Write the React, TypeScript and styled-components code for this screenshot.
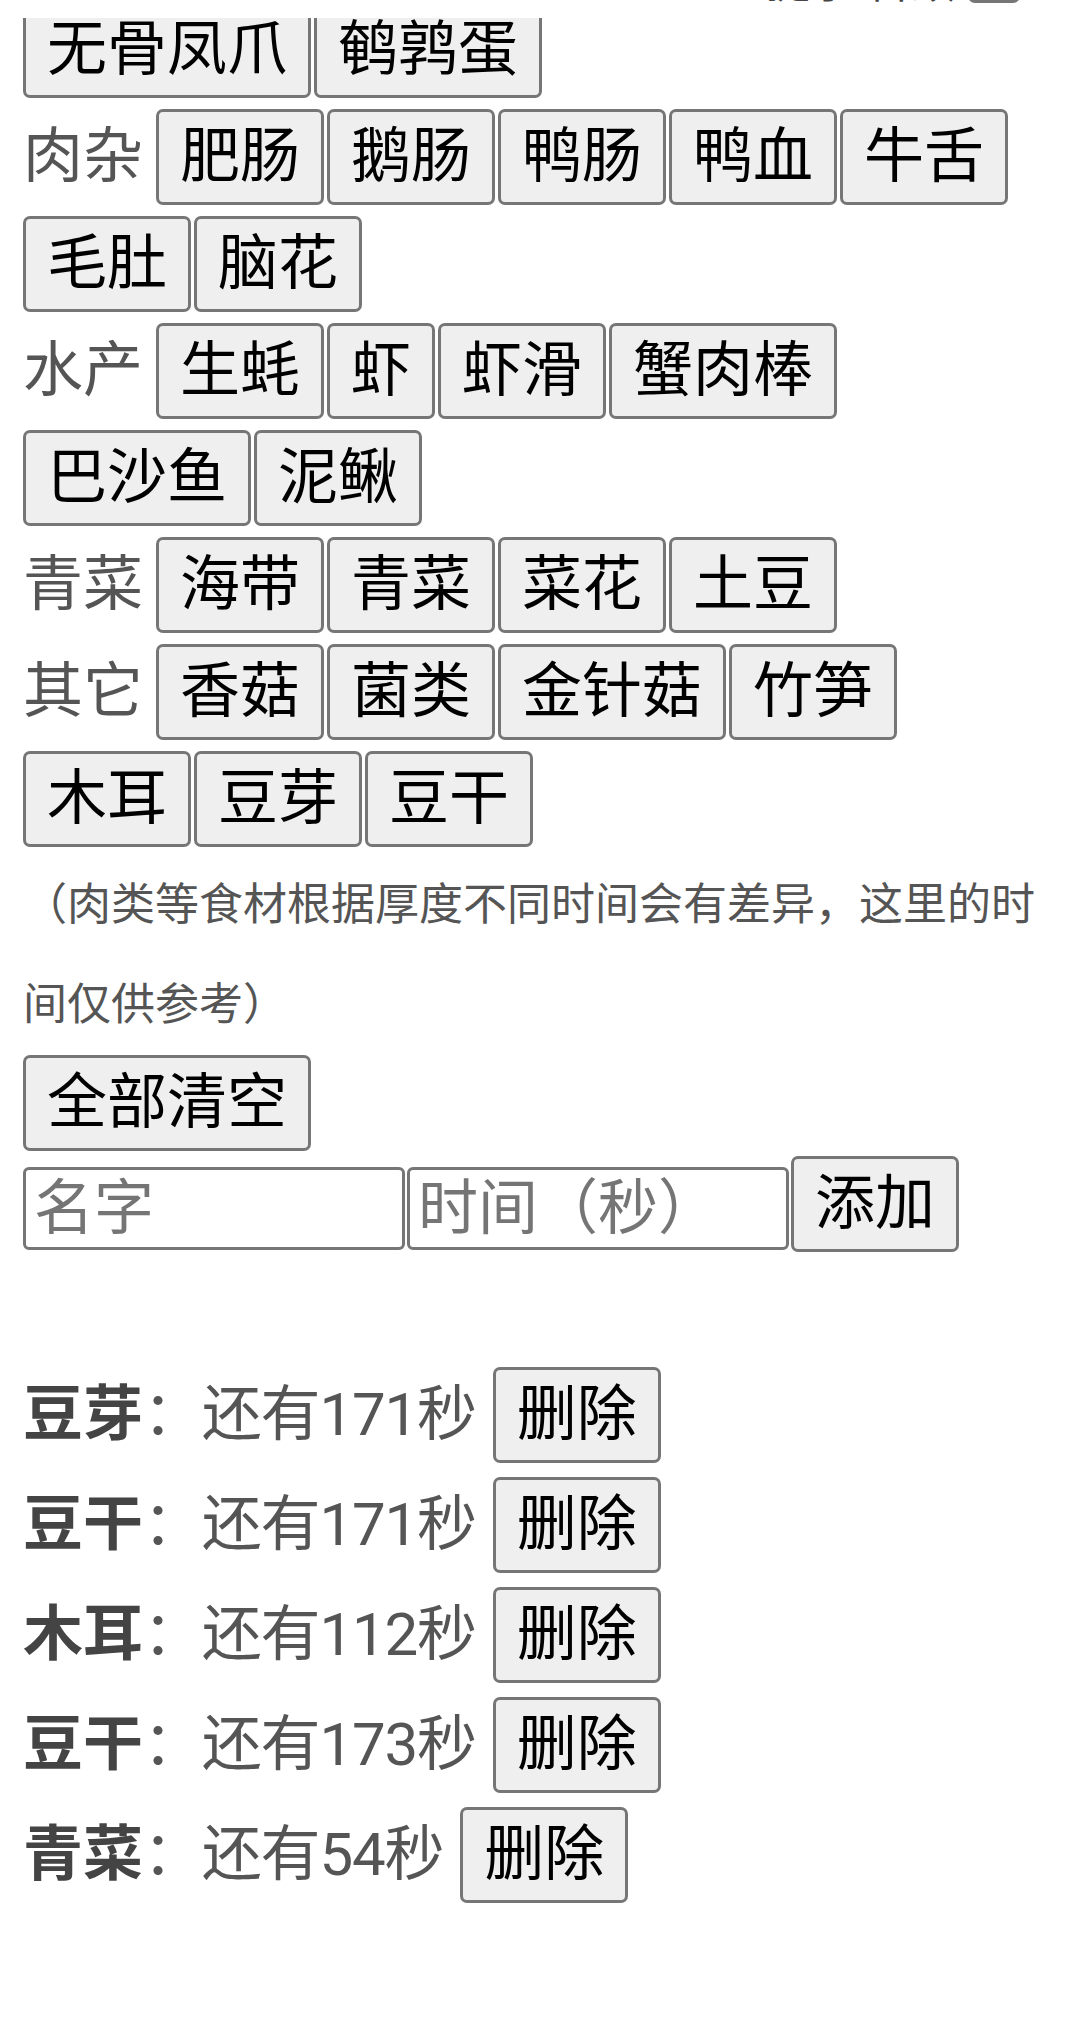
import React from 'react';
import styled, { createGlobalStyle } from 'styled-components';

interface Group {
  label: string;
  items: string[];
}

interface Timer {
  name: string;
  left: number;
}

const groups: Group[] = [
  { label: '', items: ['无骨凤爪', '鹌鹑蛋'] },
  { label: '肉杂', items: ['肥肠', '鹅肠', '鸭肠', '鸭血', '牛舌', '毛肚', '脑花'] },
  { label: '水产', items: ['生蚝', '虾', '虾滑', '蟹肉棒', '巴沙鱼', '泥鳅'] },
  { label: '青菜', items: ['海带', '青菜', '菜花', '土豆'] },
  { label: '其它', items: ['香菇', '菌类', '金针菇', '竹笋', '木耳', '豆芽', '豆干'] },
];

const timers: Timer[] = [
  { name: '豆芽', left: 171 },
  { name: '豆干', left: 171 },
  { name: '木耳', left: 112 },
  { name: '豆干', left: 173 },
  { name: '青菜', left: 54 },
];

const GlobalStyle = createGlobalStyle`
  body {
    margin: 0;
    background: #fff;
    color: #555;
    font-family: Roboto, "Noto Sans CJK SC", sans-serif;
  }
`;

const TopBar = styled.div`
  position: fixed;
  top: 0;
  left: 0;
  right: 0;
  height: 18px;
  background: #fff;
  overflow: hidden;
  display: flex;
  justify-content: flex-end;
  align-items: flex-end;
  padding-right: 60px;
  z-index: 10;
`;

const TopBarInner = styled.div`
  display: flex;
  align-items: flex-end;
  gap: 13px;
  height: 60px;
  margin-bottom: 5px;
  font-size: 44px;
  line-height: 60px;
  color: #444;
`;

const TopBarButton = styled.button`
  font-family: inherit;
  font-size: 36px;
  line-height: 46px;
  height: 56px;
  padding: 0 5px;
  margin-bottom: 10px;
  border: 3px solid #767676;
  border-radius: 7px;
  background: #efefef;
  color: #000;
`;

const Page = styled.div`
  padding: 2px 24px 60px 23px;
`;

const Groups = styled.div`
  display: flex;
  flex-direction: column;
  gap: 11px;
`;

const GroupRow = styled.div`
  display: flex;
  flex-wrap: wrap;
  align-items: baseline;
  column-gap: 3px;
  row-gap: 11px;
`;

const GroupLabel = styled.span`
  font-size: 60px;
  line-height: 84px;
  margin-right: 10px;
  color: #555;
`;

const Button = styled.button`
  font-family: Roboto, "Noto Sans CJK SC", sans-serif;
  font-size: 60px;
  line-height: 84px;
  padding: 3px 21px;
  border: 3px solid #767676;
  border-radius: 7px;
  background: #efefef;
  color: #000;
  white-space: nowrap;
  cursor: pointer;
`;

const Note = styled.p`
  margin: 8px 0 0;
  font-size: 44px;
  line-height: 100px;
  color: #555;
`;

const FormRow = styled.div`
  display: flex;
  align-items: flex-end;
  gap: 2px;
  margin-top: 5px;
`;

const Input = styled.input`
  box-sizing: border-box;
  width: 382px;
  height: 83px;
  margin-bottom: 2px;
  padding: 0 8px;
  border: 3px solid #767676;
  border-radius: 6px;
  background: #fff;
  font-family: Roboto, "Noto Sans CJK SC", sans-serif;
  font-size: 60px;
  color: #000;

  &::placeholder {
    color: #757575;
  }
`;

const TimerList = styled.div`
  display: flex;
  flex-direction: column;
  gap: 14px;
  margin-top: 115px;
`;

const TimerRow = styled.div`
  display: flex;
  align-items: baseline;
  font-size: 60px;
  line-height: 84px;
  color: #555;
`;

const TimerName = styled.b`
  font-weight: 700;
  color: #444;
`;

const TimerLeft = styled.span`
  letter-spacing: -1.2px;
`;

const DeleteButton = styled(Button)`
  margin-left: 17px;
`;

const App: React.FC = () => {
  return (
    <>
      <GlobalStyle />
      <TopBar>
        <TopBarInner>
          <span>提示</span>
          <span>音效</span>
          <TopBarButton>开</TopBarButton>
        </TopBarInner>
      </TopBar>
      <Page>
        <Groups>
          {groups.map((group, i) => (
            <GroupRow key={i}>
              {group.label && <GroupLabel>{group.label}</GroupLabel>}
              {group.items.map((item) => (
                <Button key={item}>{item}</Button>
              ))}
            </GroupRow>
          ))}
        </Groups>
        <Note>（肉类等食材根据厚度不同时间会有差异，这里的时间仅供参考）</Note>
        <Button>全部清空</Button>
        <FormRow>
          <Input placeholder="名字" />
          <Input placeholder="时间（秒）" />
          <Button>添加</Button>
        </FormRow>
        <TimerList>
          {timers.map((timer, i) => (
            <TimerRow key={i}>
              <TimerName>{timer.name}</TimerName>
              <TimerLeft>：还有{timer.left}秒</TimerLeft>
              <DeleteButton>删除</DeleteButton>
            </TimerRow>
          ))}
        </TimerList>
      </Page>
    </>
  );
};

export default App;
